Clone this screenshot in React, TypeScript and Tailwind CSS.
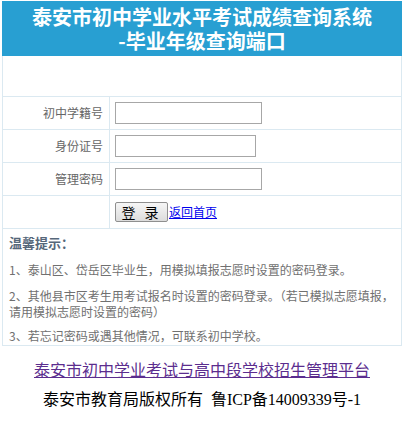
import React from 'react';

const cjk = "font-['Noto_Sans_CJK_SC',sans-serif]";

function Row({ label, children }: { label?: string; children: React.ReactNode }) {
  return (
    <div className="flex h-[33px] border-b border-[#dbe9f1]">
      <div className="w-[107px] shrink-0 border-r border-[#dbe9f1] pr-[6px] flex items-center justify-end text-[12px] text-[#666]">
        {label}
      </div>
      <div className="flex items-center pl-[5px]">{children}</div>
    </div>
  );
}

export default function App() {
  return (
    <div className={`bg-white min-h-[426px] ${cjk}`}>
      <div className="ml-[2px] mt-[1px] w-[400px]">
        {/* header */}
        <div className="h-[55px] bg-[#289fd2] text-white text-[20px] font-bold leading-[24px] flex flex-col items-center justify-center">
          <div>泰安市初中学业水平考试成绩查询系统</div>
          <div>-毕业年级查询端口</div>
        </div>

        <div className="border-x border-[#dbe9f1]">
          <div className="h-[41px] border-b border-[#dbe9f1]" />

          <Row label="初中学籍号">
            <input className="w-[147px] h-[22px] border border-[#a7a7a7] outline-none" />
          </Row>
          <Row label="身份证号">
            <input className="w-[141px] h-[22px] border border-[#a7a7a7] outline-none" />
          </Row>
          <Row label="管理密码">
            <input className="w-[147px] h-[22px] border border-[#a7a7a7] outline-none" />
          </Row>
          <Row>
            <button className="w-[53px] h-[20px] border border-[#8f8f8f] rounded-[2px] bg-gradient-to-b from-[#f6f6f6] to-[#dcdcdc] text-[14px] leading-none tracking-[3px] text-black">
              登 录
            </button>
            <a href="#" className="ml-[1px] text-[12px] text-[#0000ee] underline">返回首页</a>
          </Row>

          {/* tips */}
          <div className="h-[117px] border-b border-[#dbe9f1] px-[6px] pt-[5px] text-[12px] leading-[16px] text-[#707070]">
            <div className="font-bold text-[#56677a] text-[13px] leading-[18px]">温馨提示：</div>
            <p className="mt-[10px]">1、泰山区、岱岳区毕业生，用模拟填报志愿时设置的密码登录。</p>
            <p className="mt-[10px]">2、其他县市区考生用考试报名时设置的密码登录。（若已模拟志愿填报，请用模拟志愿时设置的密码）</p>
            <p className="mt-[8px]">3、若忘记密码或遇其他情况，可联系初中学校。</p>
          </div>
        </div>

        {/* footer */}
        <div className="flex flex-col items-center pt-[13px] text-[16px] leading-[20px]">
          <a href="#" className="text-[#5b2d8e] underline">泰安市初中学业考试与高中段学校招生管理平台</a>
          <div className="mt-[11px] text-black font-['Liberation_Serif','Noto_Sans_CJK_SC',serif]">
            泰安市教育局版权所有&nbsp;&nbsp;鲁ICP备14009339号-1
          </div>
        </div>
      </div>
    </div>
  );
}
